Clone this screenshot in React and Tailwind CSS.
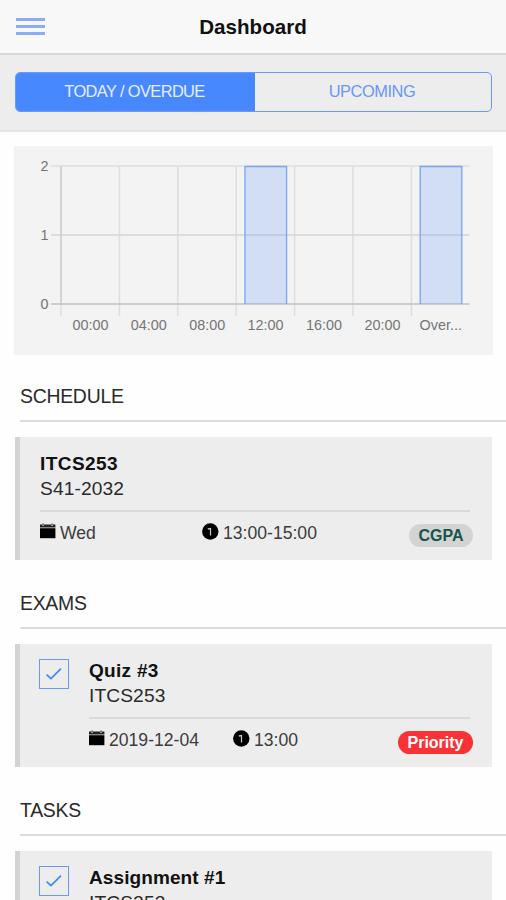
import React from "react";

const chartData = [
    { label: "00:00", value: 0 },
    { label: "04:00", value: 0 },
    { label: "08:00", value: 0 },
    { label: "12:00", value: 2 },
    { label: "16:00", value: 0 },
    { label: "20:00", value: 0 },
    { label: "Over...", value: 2 },
];

const STEP = 58.4;
const LEFT = 47;
const TOP = 20;
const BOTTOM = 158;

function CalendarIcon() {
    return (
        <svg className="w-4 h-4 shrink-0" viewBox="0 0 16 16">
            <path d="M0 5.2h15.4v10H0z" fill="#000" />
            <path d="M0 1.6h2.3v1.1h1.6V1.6h7.4v1.1h1.6V1.6h2.5v2.8H0z" fill="#222" />
            <path d="M2.5 0.5h1.2v1.6H2.5zM11.5 0.5h1.2v1.6h-1.2z" fill="#333" />
        </svg>
    );
}

function ClockIcon() {
    return (
        <svg className="w-[17px] h-[17px] shrink-0" viewBox="0 0 17 17">
            <circle cx="8.3" cy="8.5" r="8.2" fill="#000" />
            <path d="M5.8 6 8.5 5.6V12.6" fill="none" stroke="#c4c4c4" strokeWidth="1.3" />
        </svg>
    );
}

function Checkbox() {
    return (
        <div className="w-[30px] h-[30px] shrink-0 border-[1.5px] border-[#6d98fa] flex items-center justify-center -ml-px mr-5">
            <svg className="w-[18px] h-[18px]" viewBox="0 0 18 18">
                <path d="M1.6 9.6 6 13.6 16 3.7" fill="none" stroke="#3f86fb" strokeWidth="1.7" />
            </svg>
        </div>
    );
}

function Chart() {
    return (
        <div className="mx-[14px] mt-[14px] h-[209px]">
            <svg className="block w-[479px] h-[209px] bg-[#f3f3f3]" viewBox="0 0 479 209">
                <g stroke="#dedede" strokeWidth="1.5">
                    {chartData.map((d, i) => (
                        <line key={d.label} x1={LEFT + i * STEP} x2={LEFT + i * STEP} y1={TOP} y2="170" />
                    ))}
                    <line x1="37" x2="455.5" y1={TOP} y2={TOP} />
                    <line x1="37" x2="455.5" y1="89" y2="89" stroke="#d6d6d6" />
                </g>
                <line x1={LEFT} x2={LEFT} y1={TOP} y2={BOTTOM} stroke="#c4c4c4" />
                <line x1="37" x2="455.5" y1={BOTTOM} y2={BOTTOM} stroke="#c0c0c0" strokeWidth="1.4" />
                {chartData.map((d, i) =>
                    d.value > 0 ? (
                        <g key={d.label}>
                            <rect x={LEFT + i * STEP + 8.5} y={TOP} width="42" height={BOTTOM - TOP} fill="#4387fb" fillOpacity="0.19" />
                            <path
                                d={`M${LEFT + i * STEP + 8.8} ${BOTTOM}V${TOP + 0.5}h41.6V${BOTTOM}`}
                                fill="none"
                                stroke="#7ba3f6"
                                strokeWidth="1.3"
                            />
                        </g>
                    ) : null
                )}
                <g fill="#757575" fontSize="14.4">
                    {chartData.map((d, i) => (
                        <text key={d.label} x={LEFT + (i + 0.5) * STEP + 0.2} y="184.4" textAnchor="middle">
                            {d.label}
                        </text>
                    ))}
                    <text x="34.5" y="24.5" textAnchor="end">2</text>
                    <text x="34.5" y="94" textAnchor="end">1</text>
                    <text x="34.5" y="163" textAnchor="end">0</text>
                </g>
            </svg>
        </div>
    );
}

function SectionTitle({ children, className }) {
    return (
        <h2 className={`ml-5 h-[45px] border-b-2 border-[#dcdcdc] text-[19.4px] leading-[38px] tracking-[-0.25px] text-[#2a2a2a] ${className}`}>
            {children}
        </h2>
    );
}

function Card({ checkbox, title, titleClass, subtitle, children }) {
    return (
        <div className="mr-[14px] ml-[15px] mt-[15px] h-[123px] bg-[#ededed] border-l-[5px] border-[#d3d3d3] pl-5 pr-[22px] pt-[15px] flex items-start">
            {checkbox && <Checkbox />}
            <div className="flex-1">
                <div className={`text-[19px] leading-[23px] font-bold text-[#111] ${titleClass}`}>{title}</div>
                <div className="text-[19.2px] leading-[27px] tracking-[0.1px] text-[#2a2a2a]">{subtitle}</div>
                <div className="mt-[8px] border-t-2 border-[#dadada] flex h-[46px] text-[17.6px] text-[#3c3c3c]">{children}</div>
            </div>
        </div>
    );
}

function Meta({ icon, className, children }) {
    return (
        <div className={`flex items-center h-[42px] gap-1 ${className}`}>
            <span className="-mt-[4px]">{icon}</span>
            <span className="leading-[20px]">{children}</span>
        </div>
    );
}

export default function App() {
    return (
        <div className="w-[506px] h-[900px] overflow-hidden bg-[#fefefe] font-['Liberation_Sans',Arial,sans-serif]">
            <header className="h-[55px] bg-[#f8f8f8] border-b-2 border-[#d9d9d9] grid grid-cols-[60px_1fr_60px] items-center">
                <div className="ml-4 flex flex-col gap-1">
                    <span className="h-[3px] w-[29px] bg-[#8dabf6]" />
                    <span className="h-[3px] w-[29px] bg-[#8dabf6]" />
                    <span className="h-[3px] w-[29px] bg-[#8dabf6]" />
                </div>
                <h1 className="mt-[2px] text-center text-[20.6px] font-bold text-[#111]">Dashboard</h1>
            </header>

            <div className="h-[77px] bg-[#ededed] border-b-2 border-[#e4e4e4] pt-[17px] px-[15px]">
                <div className="flex h-[40px] w-[477px] rounded-[5px] border-[1.5px] border-[#6d98fa] overflow-hidden text-[16.4px] leading-[37px] text-center">
                    <div className="w-[239px] pr-[2px] bg-[#4788ff] text-[#e6efff] tracking-[-0.6px]">TODAY / OVERDUE</div>
                    <div className="flex-1 pr-[2px] text-[#6a97f7] tracking-[-0.45px]">UPCOMING</div>
                </div>
            </div>

            <Chart />

            <SectionTitle className="mt-[22px]">SCHEDULE</SectionTitle>
            <Card title="ITCS253" titleClass="tracking-[0.45px]" subtitle="S41-2032">
                <Meta icon={<CalendarIcon />} className="w-[162px]">Wed</Meta>
                <Meta icon={<ClockIcon />}>13:00-15:00</Meta>
                <span className="ml-auto mt-[12px] -mr-[3px] h-[23px] w-[64px] rounded-full bg-[#d3d3d3] text-center text-[16px] leading-[24px] font-bold text-[#19534a]">
                    CGPA
                </span>
            </Card>

            <SectionTitle className="mt-[24px]">EXAMS</SectionTitle>
            <Card checkbox title="Quiz #3" titleClass="tracking-[0.3px]" subtitle="ITCS253">
                <Meta icon={<CalendarIcon />} className="w-[144px]">2019-12-04</Meta>
                <Meta icon={<ClockIcon />}>13:00</Meta>
                <span className="ml-auto mt-[12px] -mr-[3px] h-[23px] w-[75px] rounded-full bg-[#f93235] text-center text-[16px] leading-[23px] font-bold text-white">
                    Priority
                </span>
            </Card>

            <SectionTitle className="mt-[24px]">TASKS</SectionTitle>
            <Card checkbox title="Assignment #1" titleClass="tracking-[0.1px]" subtitle="ITCS253" />
        </div>
    );
}
